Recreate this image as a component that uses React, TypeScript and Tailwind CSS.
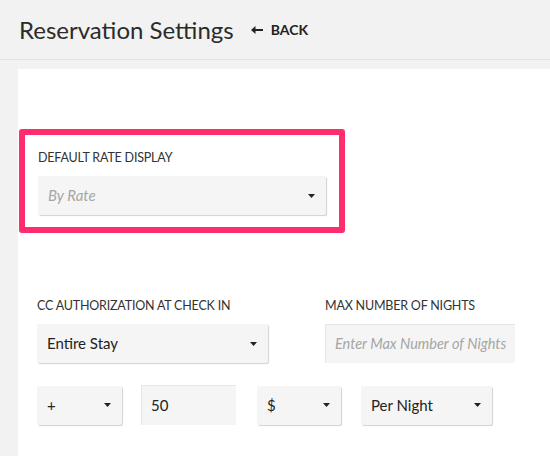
import React from 'react';

const Caret: React.FC = () => (
  <svg width="7" height="4" viewBox="0 0 7 4" className="shrink-0">
    <path d="M0 0h7L3.5 4z" fill="#222" />
  </svg>
);

interface SelectBoxProps {
  value: string;
  placeholder?: boolean;
  className?: string;
}

const SelectBox: React.FC<SelectBoxProps> = ({ value, placeholder, className }) => (
  <div
    className={`flex items-center justify-between h-[39px] pl-[10px] pr-[11px] bg-[#f5f5f5] rounded-[2px] shadow-[1px_1px_1px_rgba(0,0,0,0.18)] ${className ?? ''}`}
  >
    <span className={placeholder ? 'italic text-[#a5a5a5] text-[15px]' : 'text-[#222] text-[15px]'}>{value}</span>
    <Caret />
  </div>
);

const Label: React.FC<{ children: React.ReactNode }> = ({ children }) => (
  <div className="text-[12.5px] tracking-[-0.2px] text-[#333] uppercase leading-[13px] mb-[12px]">{children}</div>
);

export default function App() {
  return (
    <div className="w-[550px] h-[456px] overflow-hidden bg-[#f2f2f2] font-['Lato','Liberation_Sans',sans-serif]">
      {/* header */}
      <div className="h-[60px] flex items-center pl-[19px] border-b border-[#e3e3e3]">
        <h1 className="text-[24px] text-[#2b2b2b] leading-none">Reservation Settings</h1>
        <button className="ml-[17px] flex items-center gap-[8px] text-[14px] font-bold text-[#222]">
          <svg width="12" height="8" viewBox="0 0 12 8">
            <path d="M0 4 4.5 0v3H12v2H4.5v3z" fill="#222" />
          </svg>
          BACK
        </button>
      </div>

      {/* panel */}
      <div className="ml-[18px] mt-[9px] h-[400px] bg-white pt-[60px]">
        <div className="ml-[1px] w-[326px] h-[104px] border-[6px] border-[#ff2d6e] rounded-[3px] pl-[13px] pt-[16px]">
          <Label>Default Rate Display</Label>
          <SelectBox value="By Rate" placeholder className="w-[288px]" />
        </div>

        <div className="pl-[19px] mt-[66px] flex gap-[57px]">
          <div>
            <Label>CC Authorization at Check In</Label>
            <SelectBox value="Entire Stay" className="w-[231px]" />
          </div>
          <div>
            <Label>Max Number of Nights</Label>
            <div className="h-[39px] w-[190px] flex items-center pl-[9px] bg-[#f5f5f5] border-t border-l border-[#e6e6e6] overflow-hidden whitespace-nowrap">
              <span className="italic text-[14.5px] text-[#a5a5a5]">Enter Max Number of Nights</span>
            </div>
          </div>
        </div>

        <div className="pl-[19px] mt-[22px] flex items-center">
          <SelectBox value="+" className="w-[85px]" />
          <div className="ml-[19px] h-[40px] w-[95px] flex items-center pl-[9px] bg-[#f5f5f5] border-t border-l border-[#e6e6e6] text-[15px] text-[#222]">
            50
          </div>
          <SelectBox value="$" className="ml-[21px] w-[84px]" />
          <SelectBox value="Per Night" className="ml-[20px] w-[131px]" />
        </div>
      </div>
    </div>
  );
}
